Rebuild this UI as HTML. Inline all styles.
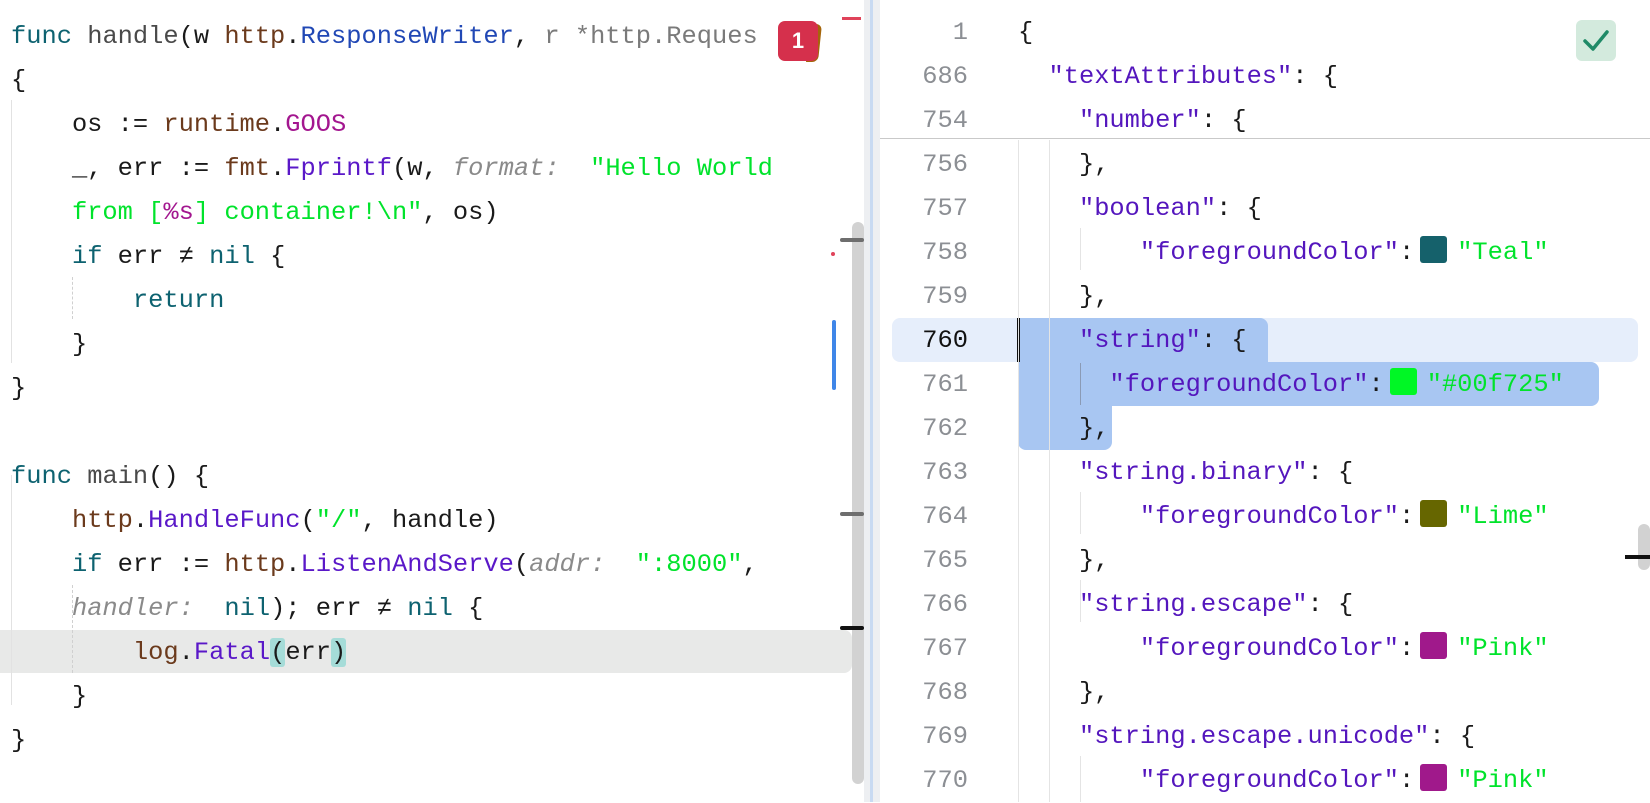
<!DOCTYPE html>
<html><head><meta charset="utf-8"><style>
*{margin:0;padding:0;box-sizing:border-box}
body{width:1650px;height:802px;background:#fff;position:relative;overflow:hidden;font-family:"Liberation Mono",monospace;font-size:25.4px;color:#1a1a1a}
.l{position:absolute;height:44px;line-height:44px;white-space:pre}
.kw{color:#0d6270}.fn{color:#4a4a4a}.pk{color:#6b3a1c}.ty{color:#2148b5}.me{color:#5a18c8}.gl{color:#a3168f}
.st{color:#00e32b}.hi{color:#8a8a8a;font-style:italic}.gr{color:#7a7a7a}.k{color:#5416bd}
.ln{position:absolute;left:880px;width:88px;text-align:right;color:#8c8f94;height:44px;line-height:44px}
.sw{display:inline-block;width:27px;height:27px;border-radius:3px;vertical-align:-4px;margin:0 10px 0 6px}
.bm{background:#a5dcd8;border-radius:3px}
</style></head><body>
<!-- left pane -->
<div style="position:absolute;left:0;top:630px;width:852px;height:43px;background:#e8e9e8;border-radius:0 8px 8px 0"></div>
<div style="position:absolute;left:11px;top:100px;width:1px;height:263px;background:#e2e2e2"></div>
<div style="position:absolute;left:11px;top:475px;width:1px;height:230px;background:#e2e2e2"></div>
<div style="position:absolute;left:72px;top:277px;width:0;height:42px;border-left:1px dashed #d0d0d0"></div>
<div style="position:absolute;left:72px;top:585px;width:0;height:88px;border-left:1px dashed #d0d0d0"></div>

<div class="l" style="left:11px;top:15px"><span class="kw">func</span> <span class="fn">handle</span>(w <span class="pk">http</span>.<span class="ty">ResponseWriter</span>, <span class="gr">r *http.Reques</span></div>
<div class="l" style="left:11px;top:59px">{</div>
<div class="l" style="left:11px;top:103px">    os := <span class="pk">runtime</span>.<span class="gl">GOOS</span></div>
<div class="l" style="left:11px;top:147px">    _, err := <span class="pk">fmt</span>.<span class="me">Fprintf</span>(w, <span class="hi">format:</span>  <span class="st">"Hello World</span></div>
<div class="l" style="left:11px;top:191px">    <span class="st">from [<span class="gl">%s</span>] container!\n"</span>, os)</div>
<div class="l" style="left:11px;top:235px">    <span class="kw">if</span> err ≠ <span class="kw">nil</span> {</div>
<div class="l" style="left:11px;top:279px">        <span class="kw">return</span></div>
<div class="l" style="left:11px;top:323px">    }</div>
<div class="l" style="left:11px;top:367px">}</div>
<div class="l" style="left:11px;top:455px"><span class="kw">func</span> <span class="fn">main</span>() {</div>
<div class="l" style="left:11px;top:499px">    <span class="pk">http</span>.<span class="me">HandleFunc</span>(<span class="st">"/"</span>, handle)</div>
<div class="l" style="left:11px;top:543px">    <span class="kw">if</span> err := <span class="pk">http</span>.<span class="me">ListenAndServe</span>(<span class="hi">addr:</span>  <span class="st">":8000"</span>,</div>
<div class="l" style="left:11px;top:587px">    <span class="hi">handler:</span>  <span class="kw">nil</span>); err ≠ <span class="kw">nil</span> {</div>
<div class="l" style="left:11px;top:631px">        <span class="pk">log</span>.<span class="me">Fatal</span><span class="bm">(</span>err<span class="bm">)</span></div>
<div class="l" style="left:11px;top:675px">    }</div>
<div class="l" style="left:11px;top:719px">}</div>

<!-- badge -->
<div style="position:absolute;left:808px;top:24px;width:12px;height:38px;background:#a5650b;border-radius:0 6px 6px 0;transform:skewX(-6deg)"></div>
<div style="position:absolute;left:778px;top:21px;width:40px;height:40px;background:#d5304c;border-radius:7px;color:#fff;font-family:'Liberation Sans',sans-serif;font-weight:bold;font-size:22px;text-align:center;line-height:40px">1</div>
<div style="position:absolute;left:842px;top:17px;width:19px;height:3px;background:#e0435a"></div>

<!-- left scrollbar & markers -->
<div style="position:absolute;left:852px;top:222px;width:12px;height:562px;background:#d2d2d2;border-radius:6px"></div>
<div style="position:absolute;left:840px;top:238px;width:24px;height:4px;background:#6e6e6e;border-radius:2px"></div>
<div style="position:absolute;left:840px;top:512px;width:24px;height:4px;background:#6e6e6e;border-radius:2px"></div>
<div style="position:absolute;left:840px;top:626px;width:24px;height:4px;background:#111;border-radius:2px"></div>
<div style="position:absolute;left:831px;top:252px;width:4px;height:4px;background:#e0435a;border-radius:2px"></div>
<div style="position:absolute;left:832px;top:320px;width:4px;height:70px;background:#3f86e8;border-radius:2px"></div>
<div style="position:absolute;left:864px;top:0;width:16px;height:802px;background:#edeff2"></div>
<div style="position:absolute;left:870px;top:0;width:3px;height:802px;background:#c8daf2"></div>

<!-- right pane -->
<div style="position:absolute;left:892px;top:318px;width:746px;height:44px;background:#e6eefb;border-radius:8px"></div>
<div style="position:absolute;left:1018px;top:318px;width:250px;height:44px;background:#a8c6f2;border-radius:0 8px 0 0"></div>
<div style="position:absolute;left:1018px;top:362px;width:581px;height:44px;background:#a8c6f2;border-radius:0 8px 8px 0"></div>
<div style="position:absolute;left:1018px;top:406px;width:94px;height:44px;background:#a8c6f2;border-radius:0 0 8px 8px"></div>
<div style="position:absolute;left:1017px;top:318px;width:3px;height:44px;background:#111"></div>
<div style="position:absolute;left:1018px;top:140px;width:1px;height:662px;background:#e4e4e4"></div>
<div style="position:absolute;left:1049px;top:140px;width:1px;height:662px;background:#e4e4e4"></div>
<div style="position:absolute;left:1080px;top:228px;width:1px;height:42px;background:#e4e4e4"></div>
<div style="position:absolute;left:1080px;top:363px;width:1px;height:42px;background:#8a9ab5"></div>
<div style="position:absolute;left:1080px;top:492px;width:1px;height:42px;background:#e4e4e4"></div>
<div style="position:absolute;left:1080px;top:580px;width:1px;height:42px;background:#e4e4e4"></div>
<div style="position:absolute;left:1080px;top:756px;width:1px;height:46px;background:#e4e4e4"></div>
<div style="position:absolute;left:880px;top:138px;width:770px;height:1px;background:#c9c9c9"></div>

<div class="ln" style="top:11px">1</div>
<div class="ln" style="top:55px">686</div>
<div class="ln" style="top:99px">754</div>
<div class="ln" style="top:143px">756</div>
<div class="ln" style="top:187px">757</div>
<div class="ln" style="top:231px">758</div>
<div class="ln" style="top:275px">759</div>
<div class="ln" style="top:319px;color:#111">760</div>
<div class="ln" style="top:363px">761</div>
<div class="ln" style="top:407px">762</div>
<div class="ln" style="top:451px">763</div>
<div class="ln" style="top:495px">764</div>
<div class="ln" style="top:539px">765</div>
<div class="ln" style="top:583px">766</div>
<div class="ln" style="top:627px">767</div>
<div class="ln" style="top:671px">768</div>
<div class="ln" style="top:715px">769</div>
<div class="ln" style="top:759px">770</div>

<div class="l" style="left:1018px;top:11px">{</div>
<div class="l" style="left:1018px;top:55px">  <span class="k">"textAttributes"</span>: {</div>
<div class="l" style="left:1018px;top:99px">    <span class="k">"number"</span>: {</div>
<div class="l" style="left:1018px;top:143px">    },</div>
<div class="l" style="left:1018px;top:187px">    <span class="k">"boolean"</span>: {</div>
<div class="l" style="left:1018px;top:231px">        <span class="k">"foregroundColor"</span>:<span class="sw" style="background:#15616b"></span><span class="st">"Teal"</span></div>
<div class="l" style="left:1018px;top:275px">    },</div>
<div class="l" style="left:1018px;top:319px">    <span class="k">"string"</span>: {</div>
<div class="l" style="left:1018px;top:363px">      <span class="k">"foregroundColor"</span>:<span class="sw" style="background:#00f725"></span><span class="st">"#00f725"</span></div>
<div class="l" style="left:1018px;top:407px">    },</div>
<div class="l" style="left:1018px;top:451px">    <span class="k">"string.binary"</span>: {</div>
<div class="l" style="left:1018px;top:495px">        <span class="k">"foregroundColor"</span>:<span class="sw" style="background:#666600"></span><span class="st">"Lime"</span></div>
<div class="l" style="left:1018px;top:539px">    },</div>
<div class="l" style="left:1018px;top:583px">    <span class="k">"string.escape"</span>: {</div>
<div class="l" style="left:1018px;top:627px">        <span class="k">"foregroundColor"</span>:<span class="sw" style="background:#a0198b"></span><span class="st">"Pink"</span></div>
<div class="l" style="left:1018px;top:671px">    },</div>
<div class="l" style="left:1018px;top:715px">    <span class="k">"string.escape.unicode"</span>: {</div>
<div class="l" style="left:1018px;top:759px">        <span class="k">"foregroundColor"</span>:<span class="sw" style="background:#a0198b"></span><span class="st">"Pink"</span></div>

<!-- check -->
<div style="position:absolute;left:1576px;top:20px;width:40px;height:41px;background:#d3eadd;border-radius:6px"></div>
<svg style="position:absolute;left:1576px;top:20px" width="40" height="41" viewBox="0 0 40 41"><path d="M9 21 L17 29 L31 12" fill="none" stroke="#1f8a67" stroke-width="3.5" stroke-linecap="round" stroke-linejoin="round"/></svg>
<!-- right scroll -->
<div style="position:absolute;left:1638px;top:524px;width:12px;height:46px;background:#d2d2d2;border-radius:6px"></div>
<div style="position:absolute;left:1625px;top:555px;width:25px;height:4px;background:#111"></div>
</body></html>
